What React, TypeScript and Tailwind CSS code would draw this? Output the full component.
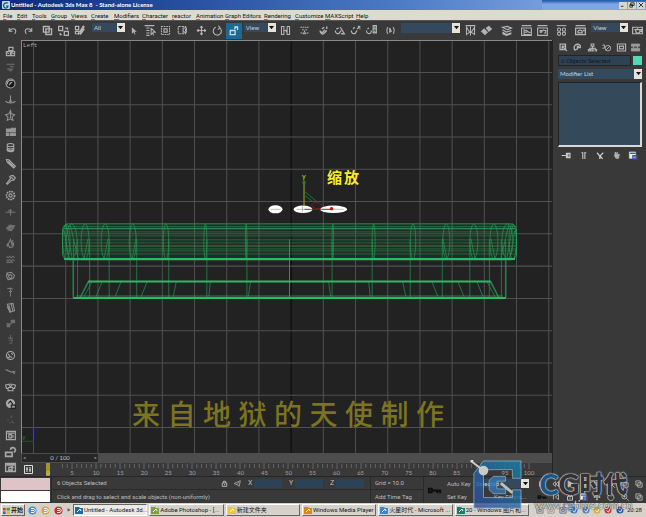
import type { ReactNode } from "react";

const glyphs: Record<string, ReactNode> = {
  undo: <path d="M4 5v4h4M4.500 8.500C6 5 12 5 12 9c0 1.500-.5 2.500-1.500 3" />,
  redo: <path d="M12 5v4H8M11.500 8.500C10 5 4 5 4 9c0 1.500.5 2.500 1.500 3" />,
  link: <path d="M3 3h7v7H3zM6 6h7v7H6z" strokeWidth="1.700" />,
  unlink: <path d="M2 3h5v5H2zM9 9h5v5H9zM10 5h3v2M4 11v2h2" strokeWidth="1.600" />,
  bind: <path d="M3 3h4v4H3zM3 9h4v3H3zM14 3l-5 8-3 2M13 2L8 10M14 6l-5 7" strokeWidth="1.500" />,
  cursor: <path d="M6 4v8l2-2 1.500 3 1-.500-1.300-3H12z" fill="currentColor" stroke="none" />,
  byName: <path d="M2 2h12M4 5h4M4 8h4M4 11h4M4 14h4M10 5v8l2-2 1 3M10 5l5 5h-3" />,
  rect: <><path d="M3 3h10v10H3z" strokeDasharray="2 1" /><path d="M6 6h4v4H6z" /></>,
  crossing: <><path d="M4 3h9v9H4z" strokeDasharray="3 1" /><path d="M10 5h4v5h-4z" /></>,
  move: <path d="M8 3v10M3 8h10M6.500 4.500L8 3l1.500 1.500M6.500 11.500L8 13l1.500-1.500M4.500 6.500L3 8l1.500 1.500M11.500 6.500L13 8l-1.500 1.500" strokeWidth="1.500" />,
  rotate: <path d="M10.500 4.500A5 5 0 1 1 6 4M9 2l2 2.500L8.500 7" />,
  scale: <path d="M4 8h6v5H4zM9 6l3-3M9 3.500h4v4" strokeWidth="1.600" />,
  pivot: <path d="M3 3h3v10H3zM10 3h3v10h-3zM6 8h4M9 7v3" />,
  manip: <path d="M3 4h10M3 11h10M8 8v4M6 12h4M5 7h2M9 7h2" strokeDasharray="2 .7" />,
  snap: <path d="M4 8c-1 3 3 6 5 3l3-3M6 6l3-2M5 9c0 2 2 2 3 0l2-2M12 3v3" strokeWidth="1.700" />,
  angle: <path d="M3 8c-1 3 3 5 5 3l2-3M4 6l3-1M9 4l5 8H10" strokeWidth="1.600" />,
  percent: <path d="M3 8c-1 3 3 5 5 3l2-3M5 6l2-2M11 3h2M10 6l4-3M13 6h1" strokeWidth="1.600" />,
  spinner: <path d="M2 8c-1 3 3 5 5 3l1-3M3 6l2-1M10 2h4v9h-4zM10 6h4M12 3v2M12 8v2" strokeWidth="1.400" />,
  named: <path d="M5 4C3 5 3 11 5 12M11 4c2 1 2 7 0 8M7 5v5l2-1z" />,
  mirror: <path d="M3 4v9l4-3zM13 4v9l-4-3zM8 3v11M2 2h12" />,
  align: <path d="M2 9l3-3 4 4-3 3zM8 5l3-2 3 3-3 3z" fill="currentColor" />,
  layer: <path d="M3 4l6-1 5 2-5 2zM3 7l5 3 6-2M3 10l5 3 6-2M3 12l5 2 6-2" strokeWidth="1.500" />,
  curve: <path d="M2 2h12M2 5h12v9H2zM5 6v7h8M6 8c3-2 4 4 7 2M6 10h3" />,
  schematic: <path d="M2 2h12M2 5h12v9H2zM5 8h2v2H5zM7 9l3-2M10 8h2v3h-2" />,
  material: <><circle cx="5" cy="7" r="2" /><circle cx="11" cy="7" r="2" /><circle cx="5" cy="12" r="2" /><circle cx="11" cy="12" r="2" /><path d="M2 2h12" /></>,
  render: <path d="M2 2h12M2 5h12v8H2zM5 9c0-2 5-2 5 0v2H5zM11 8h2" strokeWidth="1.600" />,
  teapot: <path d="M2 4h12v8H2zM5 7h6v2c0 3-5 3-5 0zM7 6h2M11 7h2v2h-2" strokeWidth="1.500" />,
  boxes: <path d="M6 3h5v4H6zM3 8h5v5H3zM9 8h4v5H9zM4 9l2 2M10 9l2 2" strokeWidth="1.500" />,
  list: <path d="M3 4h10M7 7h5M4 10h7M6 12h4" opacity=".5" />,
  ball: <><circle cx="8" cy="8" r="5.500" fill="#181818" /><path d="M4 9C4 4 8 3 12 5M6 10c2-1 1-4 4-3" strokeWidth="1.500" /></>,
  base: <path d="M8 3v9M2 10c2 3 10 3 12 0M6 10h4" opacity=".8" />,
  star: <path d="M8 2l1 4 4 1-3 3 1 4-3-2-4 2 1-4-3-3 4-1zM8 5v6" opacity=".8" />,
  tiles: <path d="M3 5h5v3H3zM9 4h5v4H9zM3 10h3v3H3zM8 10h6v3H8z" fill="currentColor" opacity=".85" />,
  stack: <path d="M4 4c2-1 6-1 8 0v8c-2 2-6 1-8 0zM4 6c2 1 6 1 8 0M4 9c2 1 6 1 8 0M4 11c2 1 6 1 8 0" />,
  pen: <path d="M3 3l3 .500 8 8-2 2-8-7zM5 5l7 7" strokeWidth="1.400" />,
  wrench: <path d="M3 13l5-6-1-3 4-1 3 3-2 3H9l-5 5zM9 5l3 3" />,
  gear: <><circle cx="8" cy="8" r="5" strokeWidth="2" strokeDasharray="2 1" /><circle cx="8" cy="8" r="2" /></>,
  axis: <path d="M2 9h12M8 5v8M5 7h5" opacity=".55" />,
  wedge: <path d="M3 9l4-4 6 1-4 5zM4 11l5 1 3-4" fill="currentColor" opacity=".5" />,
  flame: <path d="M8 3L5 9l2 4 4-1 1-5-2 3zM4 8v4M11 4l-2 5" opacity=".65" />,
  waves: <path d="M3 4l2 2 2-2 2 2 2-2 2 2M3 8l2 2 2-2 2 2 2-2 2 2M3 12l2-1 2 1 2-1 2 1" opacity=".5" />,
  loop: <path d="M4 5l5-1 4 4-2 4-6 1-2-4zM6 8c2-3 5 1 3 3s-4-1-3-3M3 5l3 3" opacity=".75" />,
  post: <path d="M4 4l7 1M8 3v11M6 8h4" opacity=".6" />,
  cloth: <path d="M4 4l7-1 2 9-6 2zM6 5l2 8M9 4l2 9M4 7l3 6" opacity=".8" />,
  dots: <path d="M3 9c2-3 4 2 6-1M9 4h4v3H9zM4 10h3v2H4z" fill="currentColor" opacity=".5" />,
  spring: <path d="M8 2v4M5 6l5 1M6 9h5M6 12l4 1M10 5v7" opacity=".35" />,
  wheel: <><circle cx="8" cy="8" r="5" /><path d="M5 6c2 1 1 5 5 4M9 5l2 2M4 10l3 1" /></>,
  rope: <path d="M2 6c4 0 6 5 12 2M11 7l2 4" opacity=".7" />,
  shirt: <path d="M2 5l4-1h4l4 1-1 4h-2v3H5V9H3zM6 5l2 2 2-2M5 8h6" strokeWidth="1.400" />,
  paint: <><circle cx="8" cy="8" r="5" fill="#aaa" /><path d="M5 8l3-3 3 4M9 10h5v4H9z" stroke="#222" fill="#999" /></>,
  faint: <path d="M9 3v3M5 8v2M10 9v3h3M6 12h2" opacity=".3" />,
  window: <path d="M3 3h11v10H3zM4 5h9M6 7h3v4H6zM11 7v4" strokeWidth="1.400" />,
  camera: <path d="M2 9h8v5H2zM8 6a3 3 0 1 1 4 3" fill="none" strokeWidth="2" />,
  preview: <path d="M2 3h12v10H2zM3 5h10M6 8l4-1v4H6zM8 8h4" strokeWidth="1.700" />,
  create: <path d="M3 3h8v8H3zM6 6l7 7M6 6v4M6 6h4" strokeWidth="1.800" />,
  modify: <path d="M4 12c-3-7 3-11 8-7v3H8v2l-4 2M7 6l3 1" strokeWidth="1.900" />,
  hierarchy: <path d="M6 3h4v3H6zM8 6v3M4 12V9h8v3M2 11h3v2H2zM7 10h2v3H7zM11 11h3v2h-3" strokeWidth="1.500" />,
  motion: <><circle cx="10" cy="9" r="4" /><path d="M7 12l6-6M2 5l3-1v5M2 9h3" /></>,
  display: <path d="M2 3h12v10H2zM5 6h6v4H5z" strokeWidth="1.600" />,
  hammer: <path d="M2 3h12v3H2zM2 9h12v4H2zM5 6v3M11 6v3" fill="currentColor" opacity=".8" />,
  pin: <path d="M1 8h6M8 5v6h5V5zM10 5v6" strokeWidth="1.800" />,
  bars: <path d="M5 4h2v9M10 4v9M9 4h3" strokeWidth="1.500" />,
  fork: <path d="M3 4l4 5 5-5M7 8l4 5M7 9v4" strokeWidth="1.800" />,
  trash: <path d="M6 5V3l2 4 1-4v4l3-1-1 6H7L5 8z" fill="currentColor" opacity=".8" />,
  config: <><path d="M2 3h9v9H2z" fill="#eee" /><path d="M3 5h8M7 8h6v5H7zM8 10h4" stroke="#4454b0" strokeWidth="1.700" /></>,
  lock: <path d="M4 7h8v6H4zM6 7V4h4v3M8 9v2" strokeWidth="1.600" />,
  plane: <path d="M2 8l11-5-2 10-4-3zM7 10l3-4" />,
  key: <path d="M2 6h3v4H2zM5 8h9v3M11 8v3" stroke="#0c0c0c" strokeWidth="2" />,
  first: <path d="M4 4v8M12 4l-5 4 5 4z" />,
  prev: <path d="M12 4L8 8l4 4zM7 4L3 8l4 4z" />,
  play: <path d="M5 3l8 5-8 5z" fill="currentColor" />,
  next: <path d="M4 4l4 4-4 4zM9 4l4 4-4 4z" />,
  last: <path d="M12 4v8M4 4l5 4-5 4z" />,
  zoom: <><circle cx="7" cy="7" r="4" /><path d="M10 10l4 4M5 7h4M7 5v4" /></>,
  extents: <path d="M3 3h7v7H3zM6 6h7v7H6z" />,
};

function Glyph({ name, className = "size-4" }: { name: string; className?: string }) {
  return (
    <svg viewBox="0 0 16 16" className={`${className} shrink-0`} fill="none" stroke="currentColor" strokeWidth="1.300" aria-hidden="true">
      {glyphs[name]}
    </svg>
  );
}

function Tool({ name, active = false }: { name: string; active?: boolean }) {
  return (
    <button aria-label={name} className={`flex size-4 shrink-0 items-center justify-center ${active ? "bg-[#1d6894] text-[#bfe4f5]" : ""}`}>
      <Glyph name={name} className="size-[13px]" />
    </button>
  );
}

function Drop({ label, value, className }: { label: string; value: string; className: string }) {
  return (
    <div className={`relative flex items-stretch bg-[#34495b] ${className}`}>
      <select aria-label={label} className="w-full appearance-none bg-transparent pl-[2px] text-[6px] leading-[8px] text-[#c9d3dc] outline-none">
        <option>{value}</option>
      </select>
      <span className="pointer-events-none absolute inset-y-0 right-0 flex w-[8px] items-center justify-center bg-[#e6e2da]">
        <svg viewBox="0 0 6 4" className="w-[5px]" aria-hidden="true"><path d="M0 0h6L3 4z" fill="#111" /></svg>
      </span>
    </div>
  );
}

const menus = ["File", "Edit", "Tools", "Group", "Views", "Create", "Modifiers", "Character", "reactor", "Animation", "Graph Editors", "Rendering", "Customize", "MAXScript", "Help"];
const sideTools = ["boxes", "list", "ball", "base", "star", "tiles", "stack", "pen", "wrench", "gear", "axis", "wedge", "flame", "waves", "loop", "post", "cloth", "dots", "spring", "wheel", "rope", "shirt", "paint", "faint", "window", "camera", "preview"];
const frames = Array.from({ length: 21 }, (_, i) => i * 5);

function TitleBar() {
  return (
    <header className="flex h-[10px] shrink-0 items-center bg-linear-to-r from-[#0b2a80] via-[#4a78c4] via-60% to-[#92b6ee] pl-[2px] text-white">
      <svg viewBox="0 0 8 8" className="size-[8px]" aria-hidden="true"><rect width="8" height="8" rx="1" fill="#b9dbe8" /><path d="M6 2C2 1 1 4 2 6s4 1 4-1H4" stroke="#145178" fill="none" strokeWidth="1.200" /></svg>
      <h1 className="grow pl-[1px] text-[6px] leading-[10px] font-bold whitespace-pre">Untitled - Autodesk 3ds Max 8  - Stand-alone License</h1>
      <div className="flex h-full w-[104px] items-center justify-end gap-[1px] bg-linear-to-b from-[#2a63b5] from-10% to-[#7fa6e2] to-40% pr-[1px]">
        {["M1 5h3", "M2 1h4v3H2zM1 3h3v3H1z", "M1 1l5 5M6 1L1 6"].map((d, i) => (
          <button key={d} aria-label={["Minimize", "Restore", "Close"][i]} className="flex h-[7px] w-[8px] items-center justify-center bg-[#d9d5cc]">
            <svg viewBox="0 0 7 7" className="size-[6px]" fill="none" stroke="#222"><path d={d} /></svg>
          </button>
        ))}
      </div>
    </header>
  );
}

function MainToolbar() {
  return (
    <div className="flex h-[20px] shrink-0 items-center border-t border-[#555] bg-[#393939] pl-1 text-[#b4b4b4]">
      <Tool name="undo" /><Tool name="redo" />
      <div className="ml-[3px] flex"><Tool name="link" /><Tool name="unlink" /><Tool name="bind" /></div>
      <Drop label="Selection filter" value="All" className="mr-[1px] ml-[5px] h-[9px] w-[33px] self-start mt-[2px]" />
      <Tool name="cursor" /><Tool name="byName" /><Tool name="rect" /><Tool name="crossing" />
      <div className="ml-[4px] flex"><Tool name="move" /><Tool name="rotate" /><Tool name="scale" active /></div>
      <Drop label="Reference coordinate system" value="View" className="mx-[2px] h-[9px] w-[32px] self-start mt-[2px]" />
      <Tool name="pivot" />
      <div className="mx-[3px] flex"><Tool name="manip" /></div>
      <Tool name="snap" /><Tool name="angle" /><Tool name="percent" /><Tool name="spinner" />
      <div className="ml-[3px] flex"><Tool name="named" /></div>
      <Drop label="Named selection sets" value="" className="mx-[2px] h-[10px] w-[60px] self-start mt-[2px]" />
      <Tool name="mirror" /><Tool name="align" />
      <div className="mx-[4px] flex"><Tool name="layer" /></div>
      <Tool name="curve" /><Tool name="schematic" />
      <div className="mx-[3px] flex gap-[3px]"><Tool name="material" /><Tool name="render" /></div>
      <Drop label="Render type" value="View" className="mr-[2px] h-[9px] w-[37px] self-start mt-[2px]" />
      <Tool name="teapot" />
    </div>
  );
}

const gridX = Array.from({ length: 17 }, (_, i) => 33.5 + i * 32.14);
const gridY = Array.from({ length: 12 }, (_, i) => 72.5 + i * 32.2);
const ribs = [[62.5, 70], [66, 77], [81, 89], [101, 109], [129, 136], [163, 168.5], [203.5, 206.5], [245, 246.5]];
const posts = [73.5, 77.5, 89.5, 109, 136.5, 168.5, 206.5, 246.5, 289];
const slants = [[81, 89], [84, 92], [96, 102], [115, 121], [141, 147], [173, 176], [208.5, 210], [248, 250]];

function HalfFrame() {
  return (
    <g strokeWidth=".8" opacity=".75">
      {ribs.map(([a, b]) => (
        <ellipse key={a} cx={(a + b) / 2} cy="241" rx={(b - a) / 2} ry="17.500" />
      ))}
      {posts.map((x) => <path key={x} d={`M${x} 239V297`} />)}
      {slants.map(([a, b]) => <path key={a} d={`M${a} 296L${b} 281`} />)}
      <path d="M70 224L78 258M66 224l6 34M64 230l5 28M84 258l4-20M104 258l4-20M132 258l4-20" />
      <path d="M73 260V297M80 297L88 281" strokeWidth="1.200" />
    </g>
  );
}

function Viewport() {
  return (
    <section className="relative min-h-0 flex-1 overflow-hidden border-t border-l border-[#8a8a8a] bg-[#222] text-[#8d8d8d]">
      <svg viewBox="22 41 529 412" preserveAspectRatio="xMinYMin slice" className="absolute inset-0 size-full" fill="none" role="img" aria-label="Left wireframe view">
        <g stroke="#505050">
          {gridX.map((x, i) => <path key={x} d={`M${x} 41V460`} stroke={i === 8 ? "#080808" : undefined} />)}
          {gridY.map((y) => <path key={y} d={`M22 ${y}H560`} />)}
        </g>
        <rect x="63" y="223" width="452" height="36" rx="6" fill="#18823f" opacity=".12" />
        <g stroke="#28a55b">
          <HalfFrame />
          <g transform="translate(578 0) scale(-1 1)"><HalfFrame /></g>
          <rect x="62.500" y="223.500" width="453" height="36" rx="6" strokeWidth=".8" />
          <path d="M64 226.500H514" opacity=".6" /><path d="M64 228.500H514" />
          <path d="M64 231.500H515M63 235.500H516M63 239.500H516M63 242.500H516M63 248.500H516M63 250.500H516M63 253.500H516" strokeWidth=".7" opacity=".65" />
          <path d="M63 245.500H516" stroke="#52834a" opacity=".8" />
          <path d="M76 295.500H502" opacity=".7" />
          <path d="M64 258.500H514M88 281H490M73 297.500H505" stroke="#2cb967" strokeWidth="2" />
        </g>
        <g fill="#fff"><ellipse cx="275" cy="209" rx="7" ry="4" /><ellipse cx="302.500" cy="209" rx="9.500" ry="3.800" /><ellipse cx="333" cy="209" rx="13.500" ry="3.800" /></g>
        <path d="M296 209h13M322 209h21M270 209h10M302 206v6" stroke="#777" strokeWidth=".5" />
        <path d="M303.500 182V206" stroke="#a8a832" />
        <path d="M304 191L316 201M304 195l8 6" stroke="#176b2c" />
        <path d="M311 205c2-4 8-4 10 0s-8 5-10 0M304 209h26" stroke="#8b1c1c" strokeWidth=".8" />
        <circle cx="331" cy="208.500" r="1.800" fill="#c11" />
        <path d="M302 183l1.500-3 1.500 3" fill="#188a20" stroke="#188a20" />
        <path d="M22 440.500H34" stroke="#185c18" /><path d="M34.500 427V440" stroke="#1a1a80" />
      </svg>
      <span className="absolute top-px left-px font-mono text-[6px] leading-[8px] text-[#aaa]">Left</span>
      <span className="absolute top-[131px] left-[280px] text-[7px] leading-[9px] font-bold text-[#b5b52c]">y</span>
      <span className="absolute top-[393px] left-0 text-[6px] leading-[8px] text-[#1f8a1f]">Y</span>
      <p className="absolute top-[126px] left-[305px] flex gap-[2px] text-[15px] leading-[20px] font-bold text-[#f5ee25]"><span>缩</span><span>放</span></p>
      <p className="absolute top-[355px] left-[110px] flex w-[312px] justify-between text-[28px] leading-[36px] font-medium text-[#7c7420]">
        {[..."来自地狱的天使制作"].map((c) => <span key={c}>{c}</span>)}
      </p>
    </section>
  );
}

function TimeControls() {
  return (
    <>
      <div className="flex h-[10px] shrink-0 bg-[#4d4d4d] p-px">
        <div className="flex w-[76px] items-center justify-between bg-[#272727] px-[1px] text-[6px] leading-[8px] text-[#c4c4c4]">
          <button aria-label="Previous frame">&lt;</button><span>0 / 100</span><button aria-label="Next frame">&gt;</button>
        </div>
      </div>
      <div className="flex h-[13px] shrink-0 bg-[#393939] text-[#a0a0a0]">
        <button aria-label="Open mini curve editor" className="flex w-[15px] shrink-0 items-center justify-center text-[#ddd]">
          <svg viewBox="0 0 9 9" className="size-[9px]" fill="none" stroke="currentColor"><path d="M.5.5h8v8h-8zM3 2v5M6 2v5M2 4h2M5 5h2" /></svg>
        </button>
        <ol className="grid min-w-0 flex-1 grid-cols-21">
          {frames.map((f) => (
            <li key={f} className="flex flex-col items-center">
              {f === 0 ? (
                <span className="flex h-full w-[4px] items-end justify-center bg-[#a3952c] text-[6px] leading-[7px] text-[#eadd60]">0</span>
              ) : (
                <>
                  <svg viewBox="0 0 24 6" preserveAspectRatio="none" className="h-[6px] w-full shrink-0" stroke="#666" aria-hidden="true"><path d="M12 0v6M2.400 1v4M7.200 1v4" />{f < 100 && <path d="M16.800 1v4M21.600 1v4" />}</svg>
                  <span className="text-[6px] leading-[7px]">{f}</span>
                </>
              )}
            </li>
          ))}
        </ol>
        <span className="w-[11px] shrink-0" />
      </div>
    </>
  );
}

function CommandPanel() {
  return (
    <aside className="w-[94px] shrink-0 border-l border-[#222] bg-[#393939] pr-[4px] pl-[5px] text-[#b4b4b4]">
      <nav className="flex h-[15px] items-center justify-between pr-[1px]" aria-label="Command panels">
        {["create", "modify", "hierarchy", "motion", "display", "hammer"].map((n) => <button key={n} aria-label={n}><Glyph name={n} className="size-[11px]" /></button>)}
      </nav>
      <div className="flex h-[11px] gap-[2px]">
        <input aria-label="Object name" readOnly value="6 Objects Selected" className="min-w-0 flex-1 border border-[#242424] bg-[#2e4254] px-[2px] text-[6px] text-[#101820]" />
        <button aria-label="Object colour" className="my-px w-[9px] bg-[#54d7b3]" />
      </div>
      <Drop label="Modifiers" value="Modifier List" className="mt-[3px] h-[10px]" />
      <div className="mt-[3px] h-[65px] border-t border-r-2 border-b-2 border-l border-t-[#222] border-r-[#d8d8d8] border-b-[#d8d8d8] border-l-[#222] bg-[#34495a]" />
      <div className="flex h-[16px] items-center justify-between px-[3px] text-[#ccc]">
        {["pin", "bars", "fork", "trash", "config"].map((n) => <button key={n} aria-label={n}><Glyph name={n} className="size-[11px]" /></button>)}
      </div>
    </aside>
  );
}

function StatusBar() {
  return (
    <footer className="flex h-[27px] shrink-0 border-t border-[#262626] bg-[#393939] font-[Liberation_Sans_Narrow,Roboto,sans-serif] text-[6px] leading-[8px] whitespace-nowrap text-[#bcbcbc]">
      <div className="grid w-[51px] shrink-0 grid-rows-2 gap-px p-px"><div className="bg-[#dec3c9]" /><input aria-label="MAXScript listener" className="min-w-0 bg-white" /></div>
      <div className="grid w-[320px] shrink-0 grid-rows-2 border-x border-[#292929]">
        <div className="flex items-center border-b border-[#292929] pl-[5px]">
          <span className="w-[163px]">6 Objects Selected</span>
          <Glyph name="lock" className="size-[9px]" /><Glyph name="plane" className="mx-[4px] size-[9px]" />
          {["X", "Y", "Z"].map((a) => (
            <label key={a} className="flex items-center text-[7px]"><span className="w-[8px] pl-[2px]">{a}</span><input aria-label={a} className="mr-[5px] h-[9px] w-[28px] bg-[#2c4256]" /></label>
          ))}
        </div>
        <p className="flex items-center pl-[5px]">Click and drag to select and scale objects (non-uniformly)</p>
      </div>
      <div className="grid w-[53px] shrink-0 grid-rows-2 border-r border-[#292929]">
        <span className="flex items-center border-b border-[#292929] pl-[4px]">Grid = 10.0</span>
        <button className="pl-[4px] text-left">Add Time Tag</button>
      </div>
      <button aria-label="Set keys" className="flex w-[20px] shrink-0 items-center justify-center"><Glyph name="key" className="size-[15px]" /></button>
      <div className="grid w-[28px] shrink-0 grid-rows-2 pl-[3px]"><button className="text-left">Auto Key</button><button className="text-left">Set Key</button></div>
      <div className="grid w-[57px] shrink-0 grid-rows-2 items-center pl-[2px]"><Drop label="Key set" value="Selected" className="h-[9px]" /><button className="pl-[20px] text-left">Key Filters...</button></div>
      <div className="grid min-w-0 flex-1 grid-cols-8 grid-rows-2 place-items-center pl-[6px]">
        {["first", "prev", "play", "next", "last", "zoom", "extents", "extents", "key", "first", "lock", "config", "move", "rotate", "zoom", "extents"].map((n, i) => <button key={i} aria-label={`${n} ${i}`}><Glyph name={n} className="size-[10px]" /></button>)}
      </div>
    </footer>
  );
}

const tasks = [
  { text: "Untitled - Autodesk 3d...", fill: "#1e6aa5" },
  { text: "Adobe Photoshop - [...", fill: "#7da23c" },
  { text: "新建文件夹", fill: "#e8c54a" },
  { text: "Windows Media Player", fill: "#d98520" },
  { text: "火星时代 - Microsoft ...", fill: "#3d87cf" },
  { text: "20 - Windows 图片和...", fill: "#14806f" },
];

function TaskBar() {
  return (
    <nav className="flex h-[14px] shrink-0 items-center bg-[#d6d2ca] font-[Roboto,'Noto_Sans_CJK_SC',sans-serif] text-[6px] leading-[8px] text-[#151515]" aria-label="Taskbar">
      <button className="ml-px flex h-[12px] w-[24px] items-center gap-px border border-t-white border-r-[#666] border-b-[#666] border-l-white px-[1px] font-bold">
        <svg viewBox="0 0 8 8" className="size-[7px]" aria-hidden="true"><path d="M0 1h3v3H0z" fill="#d33" /><path d="M4 1h4v3H4z" fill="#3a3" /><path d="M0 5h3v3H0z" fill="#36c" /><path d="M4 5h4v3H4z" fill="#db2" /></svg>
        开始
      </button>
      <div className="flex w-[48px] items-center justify-between pr-[3px] pl-[3px]">
        {["#3d8dd0", "#e0a126", "#d3262b"].map((c) => (
          <button key={c} aria-label="Quick launch"><svg viewBox="0 0 9 9" className="size-[9px]"><circle cx="4.500" cy="4.500" r="4" fill={c} /><path d="M3 2.500h2c3 0 3 4 0 4H3M3 4.500h3" stroke="#fff" fill="none" /></svg></button>
        ))}
        <span className="text-[7px]">»</span>
      </div>
      <div className="grid w-[456px] grid-cols-6 gap-[2px]">
        {tasks.map((t, i) => (
          <button key={t.text} className={`flex h-[12px] min-w-0 items-center gap-[1px] border px-[1px] whitespace-nowrap ${i === 0 ? "border-t-[#666] border-r-white border-b-white border-l-[#666] bg-[#edeae5]" : "border-t-white border-r-[#666] border-b-[#666] border-l-white"}`}>
            <svg viewBox="0 0 8 8" className="size-[8px] shrink-0" aria-hidden="true"><path d="M0 1h4l1 1h3v6H0z" fill={t.fill} /><path d="M2 6l3-3 1 2" stroke="#fff" fill="none" /></svg>
            <span>{t.text}</span>
          </button>
        ))}
      </div>
      <div className="flex flex-1 items-center justify-between pr-[4px] pl-[7px]">
        {["#777", "#999", "#668", "#3778c8", "#587bb5", "#eca32c", "#cf2d38", "#2854a4"].map((c, i) => (
          <svg key={c} viewBox="0 0 9 9" className="size-[8px]" aria-hidden="true">{i < 3 ? <path d="M1 2h7v6H1zM3 4h3v2H3z" fill="none" stroke={c} /> : <><circle cx="4.500" cy="4.500" r="4" fill={c} /><path d="M3 5l2 2 2-4" stroke="#fff" fill="none" /></>}</svg>
        ))}
        <time>20:28</time>
      </div>
    </nav>
  );
}

function Brand() {
  return (
    <div className="pointer-events-none absolute right-[6px] bottom-[5px] flex h-[52px] w-[170px] gap-[5px]">
      <svg viewBox="0 0 54 54" className="size-[52px] shrink-0" aria-hidden="true">
        <defs><linearGradient id="tile" x1="0" y1="1" x2="1" y2="0"><stop stopColor="#304a94" /><stop offset="1" stopColor="#1682a8" /></linearGradient></defs>
        <g opacity=".82">
          <path d="M14 1H53V19H44V10H14V39H44V31H53V50H4V14z" fill="url(#tile)" stroke="#a9c3dc" strokeWidth=".8" />
          <path d="M24 17h13v5H28v8h9v5H24l-4-4V21z" fill="#3577b4" stroke="#b7d0e3" strokeWidth=".7" />
          <path d="M32 24l12 10" stroke="#ddd" strokeWidth="3" />
        </g>
        <path d="M1 1L14 11" stroke="#ccc" strokeWidth="2" /><circle cx="14" cy="11" r="5" fill="#c9c9c9" /><circle cx="2" cy="1" r="1.500" fill="#ddd" />
      </svg>
      <div className="flex flex-1 flex-col items-center justify-end">
        <strong className="flex items-center text-[24px] leading-[28px] font-black whitespace-nowrap text-[#303235] [text-shadow:0_0_1px_#eee,0_0_1px_#eee,0_0_2px_#ccc]">
          <span className="text-[29px] text-[#17578a]">C</span><span className="text-[29px]">G</span><span>时代</span>
        </strong>
        <span className="text-[11px] leading-[14px] text-[#deded9] [text-shadow:0_0_1px_#333,0_0_1px_#333]">www.<span className="text-[#8ebce0]">cg</span>time.com.cn</span>
      </div>
    </div>
  );
}

export default function App() {
  return (
    <main className="relative flex h-screen flex-col overflow-hidden bg-[#393939] font-[Lato,'Noto_Sans_CJK_SC',sans-serif]">
      <TitleBar />
      <nav aria-label="Main menu" className="grid h-[10px] shrink-0 grid-cols-[14px_15px_19px_20px_20px_23px_28px_30px_24px_29px_39px_31px_30px_31px_20px] bg-[#dedad2] pl-[3px] font-[Roboto,sans-serif] text-[6px] leading-[9px] text-[#111]">
        {menus.map((m) => <button key={m} className="text-left whitespace-nowrap"><span className="underline decoration-[#777] decoration-1">{m[0]}</span>{m.slice(1)}</button>)}
      </nav>
      <MainToolbar />
      <div className="flex min-h-0 flex-1">
        <div className="flex w-[21px] shrink-0 flex-col items-center overflow-hidden bg-[#393939] pt-[3px] text-[#a8a8a8]">
          {sideTools.map((n) => <Tool key={n} name={n} />)}
        </div>
        <div className="flex min-w-0 flex-1 flex-col"><Viewport /><TimeControls /></div>
        <CommandPanel />
      </div>
      <StatusBar />
      <TaskBar />
      <Brand />
    </main>
  );
}
